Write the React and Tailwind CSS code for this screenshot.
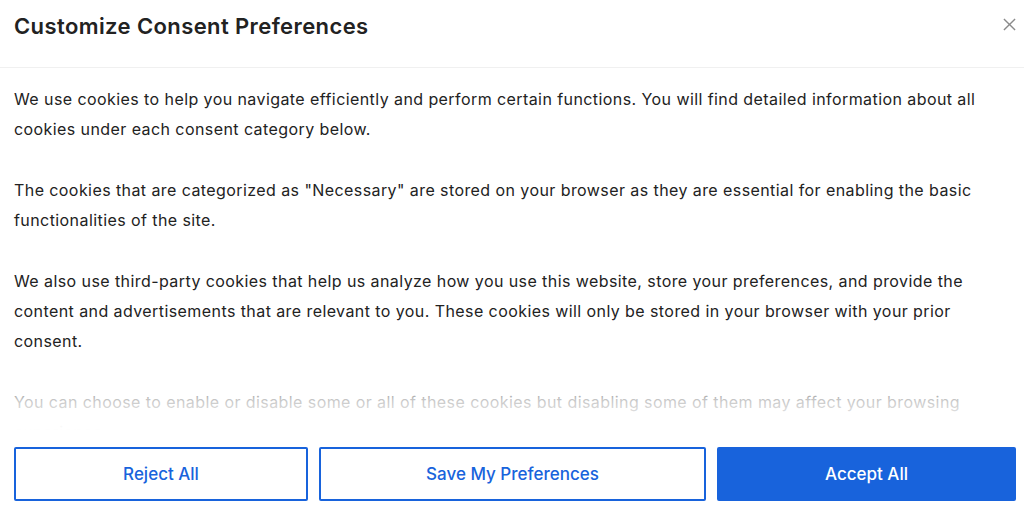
export default function App() {
  return (
    <div className="w-[1024px] h-[522px] bg-white flex flex-col overflow-hidden" style={{ fontFamily: 'Inter, "Noto Sans", sans-serif' }}>
      <div className="h-[68px] shrink-0 flex items-start justify-between border-b border-[#f0f0f0] pl-[14px] pr-[8px]">
        <h1 className="mt-[10px] text-[22px] font-semibold text-[#222] tracking-[0.4px]">Customize Consent Preferences</h1>
        <button className="mt-[18px] text-[#8a8a8a]">
          <svg width="13" height="13" viewBox="0 0 14 14" fill="none" stroke="currentColor" strokeWidth="1.5">
            <path d="M1 1L13 13M13 1L1 13" />
          </svg>
        </button>
      </div>

      <div className="relative h-[362px] shrink-0 overflow-hidden pl-[14px] pr-[10px] pt-[16px] text-[16px] leading-[30px] tracking-[0.42px] text-[#222]">
        <p className="mb-[31px]">
          We use cookies to help you navigate efficiently and perform certain functions. You will find detailed information about all cookies under each consent category below.
        </p>
        <p className="mb-[31px]">
          The cookies that are categorized as "Necessary" are stored on your browser as they are essential for enabling the basic functionalities of the site.
        </p>
        <p className="mb-[31px]">
          We also use third-party cookies that help us analyze how you use this website, store your preferences, and provide the content and advertisements that are relevant to you. These cookies will only be stored in your browser with your prior consent.
        </p>
        <p>
          You can choose to enable or disable some or all of these cookies but disabling some of them may affect your browsing experience.
        </p>
        <div className="absolute left-0 right-0 bottom-0 h-[60px] bg-linear-to-b from-white/0 via-white/75 to-white" />
      </div>

      <div className="flex gap-[11px] pl-[14px] pr-[8px] pt-[17px]">
        <button className="w-[294px] h-[54px] border-2 border-[#1863dc] rounded-[2px] text-[17px] text-[#1863dc] font-medium pt-[2px]">
          Reject All
        </button>
        <button className="w-[387px] h-[54px] border-2 border-[#1863dc] rounded-[2px] text-[17px] text-[#1863dc] font-medium pt-[2px]">
          Save My Preferences
        </button>
        <button className="flex-1 h-[54px] border-2 border-[#1863dc] bg-[#1863dc] rounded-[2px] text-[17px] text-white font-medium pt-[2px]">
          Accept All
        </button>
      </div>
    </div>
  );
}
